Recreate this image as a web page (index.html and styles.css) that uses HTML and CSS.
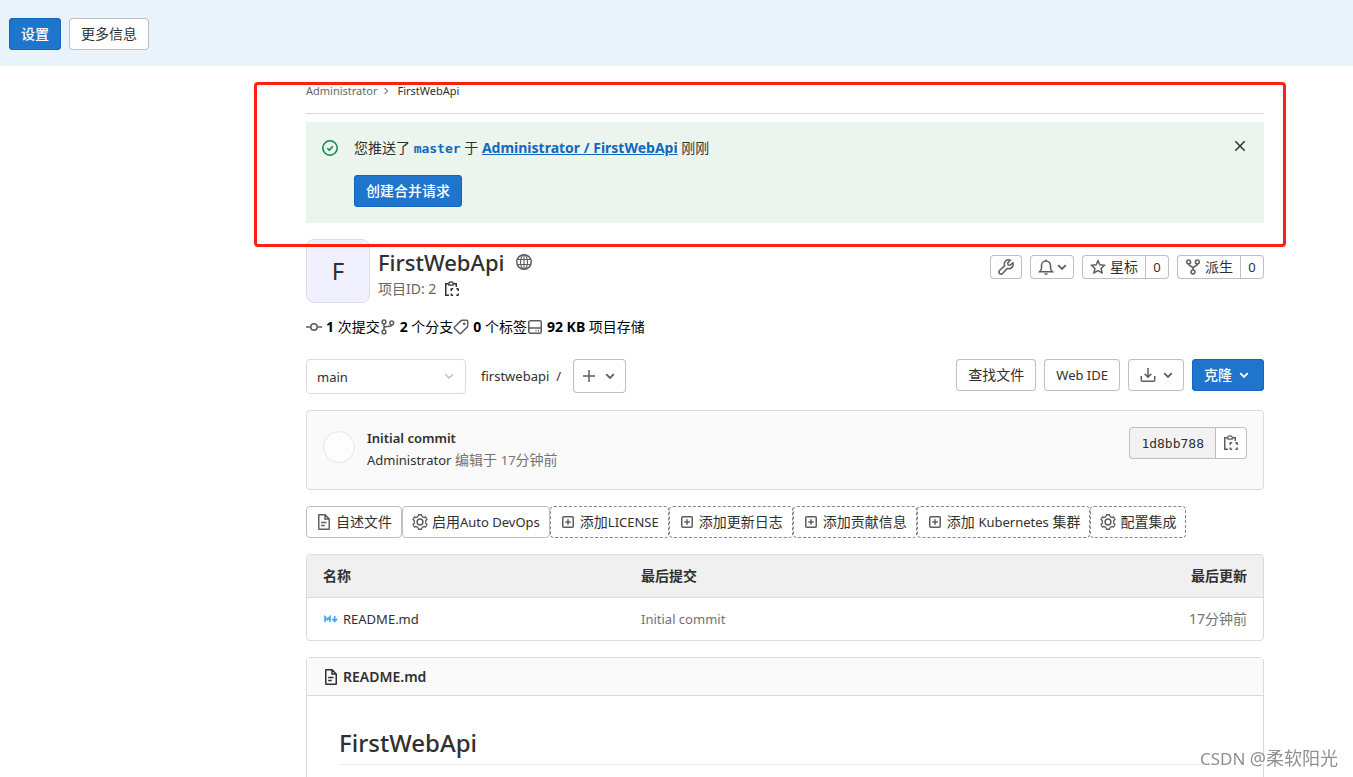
FILE: index.html
```html
<!DOCTYPE html>
<html lang="zh-CN">
<head>
<meta charset="utf-8">
<title>Administrator / FirstWebApi</title>
<link rel="stylesheet" href="styles.css">
</head>
<body>
<svg class="sprite" aria-hidden="true">
  <symbol id="chevron" viewBox="0 0 16 16"><path d="M4.200 6.200 8 10l3.800-3.800"/></symbol>
  <symbol id="chevron-right" viewBox="0 0 16 16"><path d="M6.200 4 10.200 8l-4 4"/></symbol>
  <symbol id="check-circle" viewBox="0 0 16 16"><circle cx="8" cy="8" r="7.200"/><path d="m5.300 8.300 1.900 1.800 3.700-3.900"/></symbol>
  <symbol id="close" viewBox="0 0 16 16"><path d="m3.300 3.300 9.400 9.400m0-9.400-9.400 9.400"/></symbol>
  <symbol id="earth" viewBox="0 0 16 16"><circle cx="8" cy="8" r="7.250"/><g stroke-width="1.100"><ellipse cx="8" cy="8" rx="3.500" ry="7.200"/><path d="M1.500 5.500h13M1.500 10.500h13M8 1v14"/></g></symbol>
  <symbol id="copy" viewBox="0 0 16 16"><path d="M4.500 2.750H1.750v11.500H5M9.500 2.750h2.750V6"/><path d="M4.800 4.200V2.400C4.800 1.500 5.700.8 7 .8s2.200.7 2.200 1.600v1.800Z" stroke-width="1.200"/><path d="M7.250 10V8.250c0-.3.200-.5.500-.5H9.200M12.300 7.750h1.450c.3 0 .5.200.5.500V10M14.250 12.500v1.250c0 .3-.2.500-.5.500H12.300M9.200 14.250H7.750c-.3 0-.5-.2-.5-.5V12.500"/></symbol>
  <symbol id="commit" viewBox="0 0 16 16"><circle cx="8" cy="8" r="3.200"/><path d="M0 8h4.800M11.200 8H16"/></symbol>
  <symbol id="branch" viewBox="0 0 16 16"><circle cx="4" cy="3" r="1.900"/><circle cx="4" cy="13" r="1.900"/><circle cx="11.700" cy="4" r="1.900"/><path d="M4 4.900v6.200M4 9.500c0-1.500 1-2 3-2h1.500c2 0 3-.5 3.200-1.600"/></symbol>
  <symbol id="label" viewBox="0 0 16 16"><path d="M9.300 1.300h4.400c.6 0 1 .4 1 1v4.400c0 .6-.2 1-.6 1.400L8 14.300c-.5.500-1 .5-1.500 0L1.600 9.500c-.5-.5-.5-1 0-1.500l6.200-6.100c.4-.4.900-.6 1.500-.6Z"/><circle cx="11.200" cy="4.800" r=".6"/></symbol>
  <symbol id="disk" viewBox="0 0 16 16"><rect x="1.750" y="1.750" width="12.500" height="12.500" rx="1.500"/><path d="M2 9h12M8.500 11.750h1M11 11.750h1"/></symbol>
  <symbol id="wrench" viewBox="0 0 16 16"><path d="M14.800 3.700 12.200 6.200 10.100 5.900 9.800 3.800l2.500-2.600A4.300 4.300 0 0 0 6.600 6.700L1.500 11.500a2 2 0 0 0 3 3L9.300 9.400a4.300 4.300 0 0 0 5.500-5.700Z"/></symbol>
  <symbol id="bell" viewBox="0 0 16 16"><path d="M1.500 12.750h13c-1.300-1-2-2-2-3.500V6.500a4.500 4.500 0 0 0-9 0v2.750c0 1.500-.7 2.500-2 3.500ZM6.500 15h3M8 .5v1.500"/></symbol>
  <symbol id="star" viewBox="0 0 16 16"><path d="m8 1.700 1.900 4 4.500.6-3.300 3.100.9 4.500-4-2.200-4 2.200.9-4.500L1.600 6.300l4.500-.6Z"/></symbol>
  <symbol id="fork" viewBox="0 0 16 16"><circle cx="3.700" cy="3" r="1.900"/><circle cx="12.300" cy="3" r="1.900"/><circle cx="8" cy="13" r="1.900"/><path d="M3.700 4.900C3.700 7.500 8 7 8 9.500v1.600M12.300 4.900C12.300 7.500 8 7 8 9.500"/></symbol>
  <symbol id="plus" viewBox="0 0 16 16"><path d="M8 2v12M2 8h12"/></symbol>
  <symbol id="download" viewBox="0 0 16 16"><path d="M8 1v9M4.700 6.900 8 10.200l3.300-3.300M1.250 9v4.250c0 .6.400 1 1 1h11.500c.6 0 1-.4 1-1V9"/></symbol>
  <symbol id="doc" viewBox="0 0 16 16"><path d="M2.750 1.200c0-.3.200-.5.500-.5H9l4.250 4.250v9.800c0 .3-.2.500-.5.500h-9.500a.5.500 0 0 1-.5-.5ZM9 .9v4.100h4M5.200 8.500h5.300M5.200 11.500h3.500"/></symbol>
  <symbol id="gear" viewBox="0 0 16 16"><path d="M6.600.75h2.800l.8 1.900 1.200.7 2.100-.3 1.400 2.400L13.600 7.100v1.800l1.300 1.650-1.400 2.400-2.100-.3-1.200.7-.8 1.900H6.600l-.8-1.900-1.200-.7-2.100.3-1.400-2.400L2.400 8.900V7.100L1.100 5.450l1.400-2.400 2.100.3 1.200-.7Z" stroke-width="1.300"/><circle cx="8" cy="8" r="2.900"/></symbol>
  <symbol id="plus-square" viewBox="0 0 16 16"><rect x="2.750" y="2.750" width="10.500" height="10.500" rx="1"/><path d="M8 5.250v5.500M5.250 8h5.500"/></symbol>
  <symbol id="markdown" viewBox="0 0 16 16"><path d="M2 11V6l2.500 2.700L7 6v5M11.700 5v5M9.300 7.900l2.400 2.400 2.400-2.400" stroke-width="1.700"/></symbol>
</svg>

<header class="notice">
  <button class="btn btn-primary" type="button">设置</button>
  <button class="btn" type="button">更多信息</button>
</header>

<main class="page">
  <div class="container">
    <div class="highlight-frame"></div>
    <nav class="crumbs">
      <a href="#">Administrator</a>
      <svg class="icon icon-small"><use href="#chevron-right"/></svg>
      <a class="current" href="#">FirstWebApi</a>
    </nav>

    <section class="alert">
      <svg class="icon alert-icon"><use href="#check-circle"/></svg>
      <div class="alert-body">
        <p>您推送了 <a class="ref" href="#">master</a> 于 <a class="project" href="#">Administrator / FirstWebApi</a> 刚刚</p>
        <button class="btn btn-primary" type="button">创建合并请求</button>
      </div>
      <button class="close" type="button" aria-label="关闭"><svg class="icon"><use href="#close"/></svg></button>
    </section>

    <section class="project-head">
      <div class="avatar">F</div>
      <div class="project-title">
        <h1>FirstWebApi <svg class="icon"><use href="#earth"/></svg></h1>
        <div class="project-id">项目ID: 2 <button class="plain" type="button" aria-label="复制项目ID"><svg class="icon"><use href="#copy"/></svg></button></div>
      </div>
      <div class="head-actions">
        <button class="btn btn-small" type="button" aria-label="管理"><svg class="icon"><use href="#wrench"/></svg></button>
        <button class="btn btn-small btn-bell" type="button" aria-label="通知"><svg class="icon"><use href="#bell"/></svg><svg class="icon caret"><use href="#chevron"/></svg></button>
        <div class="group"><button class="btn btn-small" type="button"><svg class="icon"><use href="#star"/></svg>星标</button><a class="btn btn-small count latin" href="#">0</a></div>
        <div class="group"><button class="btn btn-small" type="button"><svg class="icon"><use href="#fork"/></svg>派生</button><a class="btn btn-small count latin" href="#">0</a></div>
      </div>
    </section>

    <nav class="stats">
      <a href="#"><svg class="icon"><use href="#commit"/></svg><span><b>1</b> 次提交</span></a>
      <a href="#"><svg class="icon"><use href="#branch"/></svg><span><b>2</b> 个分支</span></a>
      <a href="#"><svg class="icon"><use href="#label"/></svg><span><b>0</b> 个标签</span></a>
      <a href="#"><svg class="icon"><use href="#disk"/></svg><span><b>92 KB</b> 项目存储</span></a>
    </nav>

    <section class="tree-bar">
      <div class="select-wrap">
        <select class="latin" aria-label="分支"><option>main</option></select>
        <svg class="icon"><use href="#chevron"/></svg>
      </div>
      <div class="path latin"><a href="#">firstwebapi</a><span>/</span></div>
      <button class="btn btn-add" type="button" aria-label="添加"><svg class="icon"><use href="#plus"/></svg><svg class="icon caret"><use href="#chevron"/></svg></button>
      <div class="tree-actions">
        <a class="btn" href="#">查找文件</a>
        <a class="btn latin" href="#">Web IDE</a>
        <button class="btn btn-download" type="button" aria-label="下载"><svg class="icon"><use href="#download"/></svg><svg class="icon caret"><use href="#chevron"/></svg></button>
        <button class="btn btn-primary" type="button">克隆<svg class="icon caret"><use href="#chevron"/></svg></button>
      </div>
    </section>

    <section class="commit">
      <div class="commit-avatar"></div>
      <div class="commit-text">
        <a class="commit-title latin" href="#">Initial commit</a>
        <div class="muted"><a class="latin" href="#">Administrator</a> 编辑于 <span class="latin">17</span>分钟前</div>
      </div>
      <div class="group">
        <span class="btn sha">1d8bb788</span>
        <button class="btn btn-copy" type="button" aria-label="复制提交 SHA"><svg class="icon"><use href="#copy"/></svg></button>
      </div>
    </section>

    <nav class="shortcuts">
      <a href="#"><svg class="icon"><use href="#doc"/></svg><span>自述文件</span></a>
      <a href="#"><svg class="icon"><use href="#gear"/></svg><span>启用<span class="latin">Auto DevOps</span></span></a>
      <a class="dashed" href="#"><svg class="icon"><use href="#plus-square"/></svg><span>添加<span class="latin">LICENSE</span></span></a>
      <a class="dashed" href="#"><svg class="icon"><use href="#plus-square"/></svg><span>添加更新日志</span></a>
      <a class="dashed" href="#"><svg class="icon"><use href="#plus-square"/></svg><span>添加贡献信息</span></a>
      <a class="dashed" href="#"><svg class="icon"><use href="#plus-square"/></svg><span>添加 <span class="latin">Kubernetes</span> 集群</span></a>
      <a class="dashed" href="#"><svg class="icon"><use href="#gear"/></svg><span>配置集成</span></a>
    </nav>

    <div class="files">
      <table>
        <thead><tr><th class="col-name">名称</th><th>最后提交</th><th class="col-date">最后更新</th></tr></thead>
        <tbody><tr>
          <td><a class="file latin" href="#"><svg class="icon markdown"><use href="#markdown"/></svg>README.md</a></td>
          <td class="muted latin">Initial commit</td>
          <td class="col-date muted">17分钟前</td>
        </tr></tbody>
      </table>
    </div>

    <article class="readme">
      <header><svg class="icon"><use href="#doc"/></svg><a href="#">README.md</a></header>
      <div class="readme-body"><h2>FirstWebApi</h2></div>
    </article>
  </div>
</main>
<div class="watermark">CSDN <span>@柔软阳光</span></div>
</body>
</html>
```
FILE: styles.css
```css
* { box-sizing: border-box; }
html { height: 100%; overflow: hidden; }
body {
  height: 100%;
  margin: 0;
  overflow: hidden;
  background: #fff;
  color: #303030;
  font: 14px/20px "Noto Sans", "Noto Sans CJK SC", sans-serif;
}
a { color: inherit; text-decoration: none; }
p, h1, h2 { margin: 0; }
.sprite { position: absolute; width: 0; height: 0; }
.icon {
  flex: none;
  width: 16px;
  height: 16px;
  fill: none;
  stroke: #5e5e5e;
  stroke-width: 1.5;
}
.icon-small { width: 12px; height: 12px; stroke: #868686; }
.caret { stroke-width: 1.8; }

.btn {
  display: inline-flex;
  align-items: center;
  justify-content: center;
  gap: 4px;
  height: 32px;
  padding: 0 12px;
  border: 0;
  border-radius: 4px;
  background: #fff;
  box-shadow: inset 0 0 0 1px #bfbfbf;
  color: #303030;
  font: inherit;
  line-height: 16px;
  white-space: nowrap;
}
.btn-primary {
  background: #1f75cb;
  box-shadow: inset 0 0 0 1px #1068bf;
  color: #fff;
  font-weight: 500;
}
.btn-primary .icon { stroke: #fff; }
.btn-small { height: 24px; padding: 0 8px; }
.group { display: flex; }
.group .btn { flex: none; }
.group .btn:first-child { border-radius: 4px 0 0 4px; }
.group .btn:last-child { margin-left: -1px; border-radius: 0 4px 4px 0; }
.count { width: 24px; }

.notice {
  display: flex;
  align-items: flex-end;
  gap: 8px;
  height: 66px;
  padding: 0 9px 16px;
  background: #e9f3fc;
}
.page { padding-left: 217px; }
.container {
  position: relative;
  max-width: 990px;
  margin: 0 auto;
  padding: 0 16px;
}
.highlight-frame {
  position: absolute;
  z-index: 2;
  top: 16px;
  left: -36px;
  right: -6px;
  height: 165px;
  border: 3px solid #ff2012;
  border-radius: 4px;
  pointer-events: none;
}
.crumbs {
  display: flex;
  align-items: center;
  gap: 3px;
  height: 48px;
  padding-top: 2px;
  border-bottom: 1px solid #dbdbdb;
  color: #666;
  font-size: 11px;
}
.crumbs .current { color: #303030; padding-left: 2px; }

.alert {
  display: flex;
  gap: 16px;
  margin-top: 8px;
  padding: 16px;
  background: #ecf4ee;
}
.alert-icon { margin-top: 2px; stroke: #108548; }
.alert-body { flex: 1; }
.alert-body p { margin-bottom: 17px; }
.ref { color: #1068bf; font: bold 13px "DejaVu Sans Mono", monospace; }
.project { color: #1068bf; font-weight: 700; text-decoration: underline; }
.close { align-self: flex-start; display: flex; padding: 0; border: 0; background: none; }
.close .icon { stroke: #303030; }

.project-head { display: flex; gap: 8px; margin-top: 16px; }
.avatar {
  display: grid;
  place-items: center;
  width: 64px;
  height: 64px;
  border: 1px solid #dddbee;
  border-radius: 8px;
  background: #f1f0ff;
  font-size: 24px;
  line-height: 32px;
}
.project-title { flex: 1; padding-top: 8px; }
.project-title h1 {
  display: flex;
  align-items: center;
  gap: 11px;
  font-size: 22px;
  font-weight: 500;
  line-height: 30px;
}
.project-id { display: flex; align-items: center; gap: 8px; color: #666; line-height: 24px; }
.plain { display: flex; padding: 0; border: 0; background: none; }
.plain .icon { stroke: #303030; }
.head-actions { display: flex; align-items: flex-start; gap: 8px; padding-top: 16px; }
.btn-bell { gap: 0; padding: 0 4px 0 8px; }

.stats { display: flex; margin-top: 14px; color: #000; }
.stats a { display: flex; align-items: center; gap: 4px; }

.tree-bar { display: flex; align-items: flex-start; margin-top: 22px; }
.select-wrap { position: relative; width: 160px; }
.select-wrap select {
  width: 100%;
  height: 35px;
  padding: 0 10px;
  border: 1px solid #dbdbdb;
  border-radius: 4px;
  appearance: none;
  background: #fff;
  color: #303030;
  font-family: inherit;
}
.latin { font-size: 13px; }
.select-wrap .icon { position: absolute; top: 9px; right: 9px; stroke: #bfbfbf; }
.path { display: flex; gap: 7px; padding: 7px 12px 0 15px; }
.btn-add { height: 34px; padding: 0 8px; gap: 5px; }
.tree-actions { display: flex; gap: 8px; margin-left: auto; }
.btn-download { padding: 0 8px 0 12px; }

.commit {
  display: flex;
  gap: 12px;
  height: 80px;
  margin-top: 16px;
  padding: 16px;
  border: 1px solid #dbdbdb;
  border-radius: 4px;
  background: #fafafa;
}
.commit-avatar {
  width: 32px;
  height: 32px;
  margin-top: 4px;
  border: 1px solid #e5e5e5;
  border-radius: 50%;
  background: #fdfdfd;
}
.commit-text { flex: 1; line-height: 21px; }
.commit-title { font-weight: 600; }
.muted { color: #737373; }
.muted a { color: #303030; }
.sha { background: #f2f2f2; font: 13px "DejaVu Sans Mono", monospace; }
.btn-copy { width: 32px; padding: 0; }

.shortcuts { display: flex; margin-top: 16px; }
.shortcuts a {
  display: flex;
  align-items: center;
  gap: 4px;
  height: 32px;
  padding: 0 9px;
  border: 1px solid #bfbfbf;
  border-radius: 4px;
  white-space: nowrap;
}
.shortcuts .dashed { border: 1px dashed #868686; }

.files { margin-top: 16px; border: 1px solid #dbdbdb; border-radius: 4px; overflow: hidden; }
table { width: 100%; border-collapse: collapse; table-layout: fixed; }
th, td { padding: 11px 16px; text-align: left; }
th { background: #f0f0f0; border-bottom: 1px solid #dbdbdb; font-weight: 600; }
.col-name { width: 318px; }
th.col-date, td.col-date { text-align: right; }
.file { display: flex; align-items: center; gap: 4px; }
.markdown { stroke: #42a5f5; }

.readme { margin-top: 16px; border: 1px solid #dbdbdb; border-radius: 4px; }
.readme header {
  display: flex;
  align-items: center;
  gap: 4px;
  height: 38px;
  padding: 0 16px;
  border-bottom: 1px solid #dbdbdb;
  background: #fafafa;
  font-weight: 600;
}
.readme header .icon { stroke: #303030; }
.readme-body { padding: 31px 32px 48px; }
.readme-body h2 {
  padding-bottom: 6px;
  border-bottom: 1px solid #eaeaea;
  font-size: 24px;
  font-weight: 500;
  line-height: 31px;
}
.watermark {
  position: fixed;
  right: 15px;
  bottom: 6px;
  color: #909090;
  font-size: 17px;
  line-height: 24px;
  text-shadow: 1px 1px 1px #fff;
}
.watermark span { font-size: 18px; }
```
